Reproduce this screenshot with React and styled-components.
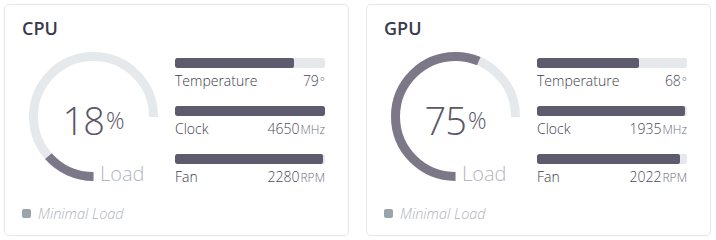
import React from 'react';
import styled, { createGlobalStyle } from 'styled-components';

const GlobalStyle = createGlobalStyle`
  body {
    margin: 0;
    background: #ffffff;
    font-family: "Open Sans", "Noto Sans", sans-serif;
  }
`;

const Board = styled.div`
  display: flex;
  gap: 17px;
  padding: 4px 0 0 4px;
`;

const Card = styled.section`
  width: 345px;
  height: 232px;
  box-sizing: border-box;
  border: 1px solid #e4e6e9;
  border-radius: 5px;
  padding: 11px 23px 0 17px;
  display: flex;
  flex-direction: column;
`;

const Title = styled.h2`
  margin: 0;
  font-size: 18px;
  line-height: 24px;
  font-weight: 600;
  color: #3a3a4c;
`;

const Body = styled.div`
  display: flex;
  gap: 17px;
  margin-top: 12px;
  padding-left: 7px;
`;

const GaugeWrap = styled.div`
  position: relative;
  width: 129px;
  height: 129px;
  flex: none;
`;

const GaugeValue = styled.div`
  position: absolute;
  inset: 0;
  display: flex;
  align-items: center;
  justify-content: center;
  padding-top: 6px;
  color: #5b5668;
  font-weight: 300;
  font-size: 38px;
  letter-spacing: -1px;
  span {
    font-size: 23px;
    margin-left: 2px;
    letter-spacing: 0;
  }
`;

const GaugeCaption = styled.div`
  position: absolute;
  left: 71px;
  bottom: -5px;
  font-size: 20px;
  font-weight: 300;
  line-height: 24px;
  color: #b3b6bd;
`;

const Stats = styled.div`
  width: 150px;
  padding-top: 6px;
  display: flex;
  flex-direction: column;
  gap: 14px;
`;

const Stat = styled.div`
  display: flex;
  flex-direction: column;
`;

const Track = styled.div`
  height: 10px;
  border-radius: 2px;
  background: #e6e9ec;
  overflow: hidden;
`;

const Fill = styled.div`
  height: 100%;
  border-radius: 2px;
  background: #5f5b6e;
`;

const StatRow = styled.div`
  display: flex;
  justify-content: space-between;
  align-items: baseline;
  margin-top: 3px;
  font-size: 14px;
  line-height: 20px;
  font-weight: 300;
  color: #3c3c4c;
`;

const StatValue = styled.span`
  color: #4a4a58;
  small {
    font-size: 12px;
    color: #6f6f7c;
    margin-left: 1px;
  }
`;

const Footer = styled.div`
  display: flex;
  align-items: center;
  gap: 7px;
  margin-top: 16px;
  font-size: 14.5px;
  font-style: italic;
  font-weight: 300;
  color: #b0b3ba;
`;

const Dot = styled.span`
  width: 9px;
  height: 9px;
  border-radius: 2px;
  background: #9ca4ab;
`;

const R = 60;
const C = 2 * Math.PI * R;
const ARC = C * 0.75;

function Gauge({ value }) {
  return (
    <GaugeWrap>
      <svg width="129" height="129" viewBox="0 0 129 129">
        <g transform="rotate(90 64.5 64.5)" fill="none" strokeWidth="9">
          <circle cx="64.5" cy="64.5" r={R} stroke="#e6e9ec" strokeDasharray={`${ARC} ${C}`} />
          <circle cx="64.5" cy="64.5" r={R} stroke="#7c7888" strokeDasharray={`${ARC * value / 100} ${C}`} />
        </g>
      </svg>
      <GaugeValue>{value}<span>%</span></GaugeValue>
      <GaugeCaption>Load</GaugeCaption>
    </GaugeWrap>
  );
}

function Monitor({ title, load, stats }) {
  return (
    <Card>
      <Title>{title}</Title>
      <Body>
        <Gauge value={load} />
        <Stats>
          {stats.map((s) => (
            <Stat key={s.label}>
              <Track><Fill style={{ width: `${s.pct}%` }} /></Track>
              <StatRow>
                <span>{s.label}</span>
                <StatValue>{s.value}<small>{s.unit}</small></StatValue>
              </StatRow>
            </Stat>
          ))}
        </Stats>
      </Body>
      <Footer><Dot />Minimal Load</Footer>
    </Card>
  );
}

const cpu = [
  { label: 'Temperature', value: 79, unit: '°', pct: 79 },
  { label: 'Clock', value: 4650, unit: 'MHz', pct: 100 },
  { label: 'Fan', value: 2280, unit: 'RPM', pct: 98.7 },
];

const gpu = [
  { label: 'Temperature', value: 68, unit: '°', pct: 68 },
  { label: 'Clock', value: 1935, unit: 'MHz', pct: 98.7 },
  { label: 'Fan', value: 2022, unit: 'RPM', pct: 95.3 },
];

export default function App() {
  return (
    <>
      <GlobalStyle />
      <Board>
        <Monitor title="CPU" load={18} stats={cpu} />
        <Monitor title="GPU" load={75} stats={gpu} />
      </Board>
    </>
  );
}
